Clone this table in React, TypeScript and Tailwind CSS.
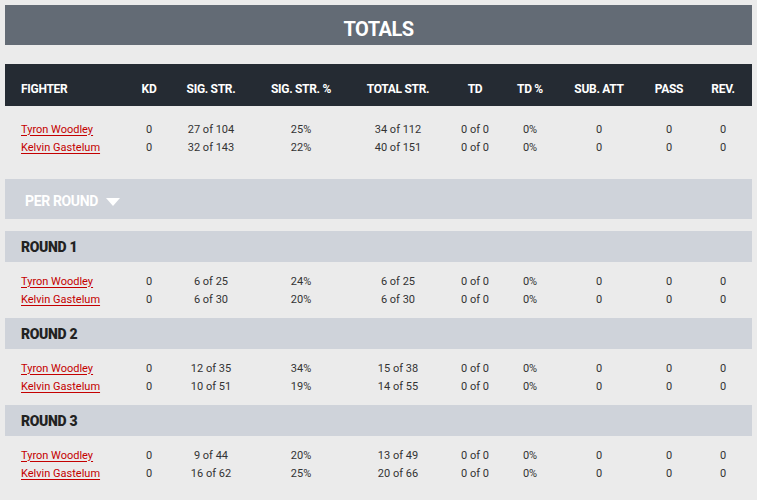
const cols = "grid grid-cols-[122px_44px_80px_100px_94px_60px_50px_88px_52px_56px] items-center"

const headers = ["KD", "SIG. STR.", "SIG. STR. %", "TOTAL STR.", "TD", "TD %", "SUB. ATT", "PASS", "REV."]

type Row = { name: string; stats: string[] }

const totals: Row[] = [
  { name: "Tyron Woodley", stats: ["0", "27 of 104", "25%", "34 of 112", "0 of 0", "0%", "0", "0", "0"] },
  { name: "Kelvin Gastelum", stats: ["0", "32 of 143", "22%", "40 of 151", "0 of 0", "0%", "0", "0", "0"] },
]

const rounds: { title: string; rows: Row[] }[] = [
  {
    title: "ROUND 1",
    rows: [
      { name: "Tyron Woodley", stats: ["0", "6 of 25", "24%", "6 of 25", "0 of 0", "0%", "0", "0", "0"] },
      { name: "Kelvin Gastelum", stats: ["0", "6 of 30", "20%", "6 of 30", "0 of 0", "0%", "0", "0", "0"] },
    ],
  },
  {
    title: "ROUND 2",
    rows: [
      { name: "Tyron Woodley", stats: ["0", "12 of 35", "34%", "15 of 38", "0 of 0", "0%", "0", "0", "0"] },
      { name: "Kelvin Gastelum", stats: ["0", "10 of 51", "19%", "14 of 55", "0 of 0", "0%", "0", "0", "0"] },
    ],
  },
  {
    title: "ROUND 3",
    rows: [
      { name: "Tyron Woodley", stats: ["0", "9 of 44", "20%", "13 of 49", "0 of 0", "0%", "0", "0", "0"] },
      { name: "Kelvin Gastelum", stats: ["0", "16 of 62", "25%", "20 of 66", "0 of 0", "0%", "0", "0", "0"] },
    ],
  },
]

function StatRow({ row }: { row: Row }) {
  return (
    <div className={`${cols} h-[18px] text-[11px] text-[#333]`}>
      <div className="pl-4">
        <a href="#" className="text-[#c40000] underline underline-offset-2 decoration-[#c40000]">
          {row.name}
        </a>
      </div>
      {row.stats.map((s, i) => (
        <div key={i} className="text-center">
          {s}
        </div>
      ))}
    </div>
  )
}

export default function App() {
  return (
    <div className="min-h-[500px] w-full bg-[#ebebeb] p-[5px] font-['Roboto',sans-serif]">
      {/* Totals title */}
      <div className="h-10 bg-[#636b75] flex items-center justify-center pt-[7px]">
        <h2 className="text-white text-[20px] font-bold tracking-tight">TOTALS</h2>
      </div>

      {/* Column header */}
      <div className={`${cols} mt-[19px] h-[42px] pt-[7px] bg-[#252b33] text-white text-[12px] font-bold tracking-tight`}>
        <div className="pl-4">FIGHTER</div>
        {headers.map((h) => (
          <div key={h} className="text-center">
            {h}
          </div>
        ))}
      </div>

      <div className="pt-[15px] pb-[22px]">
        {totals.map((r) => (
          <StatRow key={r.name} row={r} />
        ))}
      </div>

      {/* Per round toggle */}
      <div className="h-10 bg-[#cfd3da] flex items-center pl-5 pt-[5px] gap-2">
        <span className="text-white text-[14px] font-bold tracking-tight">PER ROUND</span>
        <svg width="14" height="8" viewBox="0 0 14 8">
          <path d="M0 0h14L7 8z" fill="#fff" />
        </svg>
      </div>

      {rounds.map((rd, idx) => (
        <div key={rd.title} className={idx === 0 ? "mt-3" : ""}>
          <div className="h-[31px] bg-[#cfd3da] flex items-center pl-4 pt-[2px]">
            <span className="text-[#222] text-[14px] font-black tracking-tight">{rd.title}</span>
          </div>
          <div className="pt-[11px] pb-[9px]">
            {rd.rows.map((r) => (
              <StatRow key={r.name} row={r} />
            ))}
          </div>
        </div>
      ))}
    </div>
  )
}
